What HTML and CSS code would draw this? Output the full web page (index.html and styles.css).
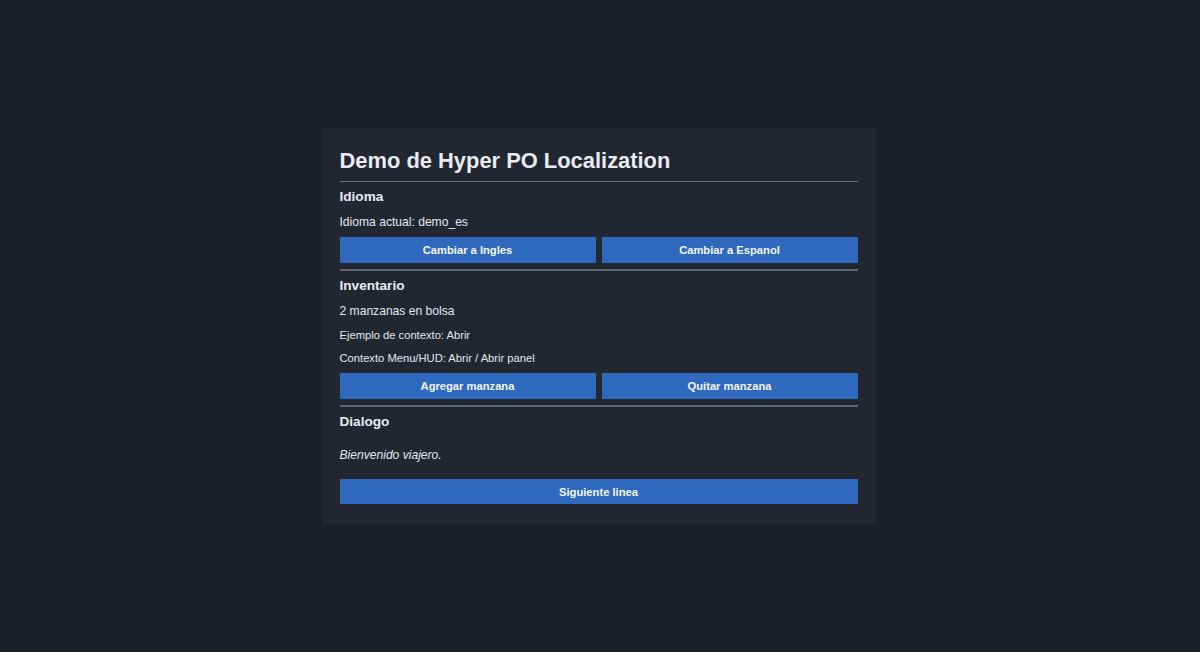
FILE: index.html
```html
<!DOCTYPE html>
<html lang="es">
<head>
<meta charset="utf-8">
<title>Demo de Hyper PO Localization</title>
<link rel="stylesheet" href="styles.css">
</head>
<body>
<main class="panel">
  <h1 class="title">Demo de Hyper PO Localization</h1>
  <h2 class="section first">Idioma</h2>
  <p class="text t-lang">Idioma actual: demo_es</p>
  <div class="row">
    <button class="btn">Cambiar a Ingles</button>
    <button class="btn">Cambiar a Espanol</button>
  </div>
  <hr class="sep">
  <h2 class="section">Inventario</h2>
  <p class="text t-count">2 manzanas en bolsa</p>
  <p class="small t-ctx1">Ejemplo de contexto: Abrir</p>
  <p class="small t-ctx2">Contexto Menu/HUD: Abrir / Abrir panel</p>
  <div class="row">
    <button class="btn">Agregar manzana</button>
    <button class="btn">Quitar manzana</button>
  </div>
  <hr class="sep">
  <h2 class="section">Dialogo</h2>
  <p class="text dialog">Bienvenido viajero.</p>
  <button class="btn wide">Siguiente linea</button>
</main>
</body>
</html>
```

FILE: styles.css
```css
html, body {
  margin: 0;
  padding: 0;
  height: 100%;
}
body {
  background: #1b1f29;
  font-family: "Liberation Sans", Arial, sans-serif;
  color: #e4e7ee;
  display: flex;
  align-items: center;
  justify-content: center;
}
.panel {
  width: 518px;
  padding: 19px 19px 20px 18px;
  margin-right: 2px;
  background: #222631;
  display: flex;
  flex-direction: column;
}
.title {
  margin: 0;
  font-size: 21.9px;
  line-height: 28px;
  font-weight: bold;
  color: #e8ebf2;
  padding-bottom: 6px;
  border-bottom: 1px solid #6a6e78;
}
.section {
  margin: 6px 0 0;
  font-size: 13.6px;
  line-height: 18px;
  font-weight: bold;
  color: #e8ebf2;
}
.section.first {
  margin-top: 6px;
}
.text {
  margin: 7px 0 0;
  font-size: 12.1px;
  line-height: 18px;
}
.small {
  margin: 6px 0 0;
  font-size: 11.2px;
  line-height: 18px;
}
.t-ctx2 {
  margin-top: 5px;
}
.dialog {
  font-style: italic;
  margin-top: 15px;
}
.row {
  margin-top: 6px;
  display: flex;
  gap: 6px;
}
.btn {
  flex: 1;
  height: 26px;
  border: none;
  padding: 0;
  background: #2f69bd;
  color: #f4f6fa;
  font-family: "Liberation Sans", Arial, sans-serif;
  font-size: 11.2px;
  font-weight: bold;
}
.btn.wide {
  flex: none;
  width: 100%;
  height: 25px;
  margin-top: 15px;
}
.sep {
  margin: 6px 0 0;
  height: 0;
  border: none;
  border-top: 1px solid #6a6e78;
  border-bottom: 1px solid #5a5e68;
}
```
